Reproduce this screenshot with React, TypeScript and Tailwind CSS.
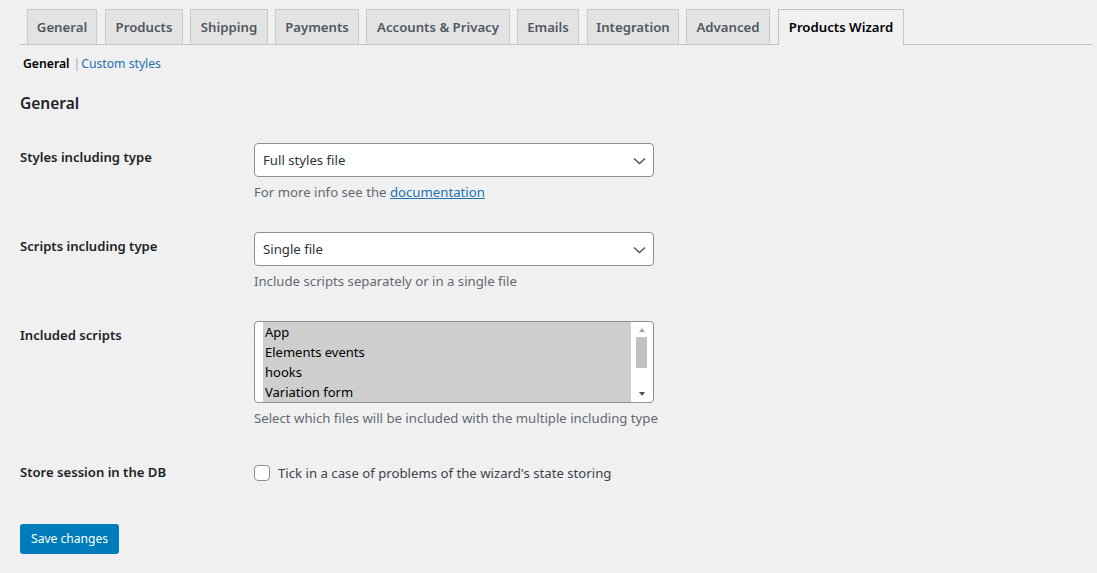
import React from 'react';

// label, width, left margin
const tabs: [string, string, string][] = [
  ['General', 'w-[70px]', 'ml-0'],
  ['Products', 'w-[78px]', 'ml-2'],
  ['Shipping', 'w-[78px]', 'ml-[7px]'],
  ['Payments', 'w-[84px]', 'ml-[7px]'],
  ['Accounts & Privacy', 'w-[144px]', 'ml-[7px]'],
  ['Emails', 'w-[62px]', 'ml-[7px]'],
  ['Integration', 'w-[92px]', 'ml-2'],
  ['Advanced', 'w-[84px]', 'ml-[7px]'],
  ['Products Wizard', 'w-[126px]', 'ml-2'],
];

const Chevron = () => (
  <svg width="13" height="8" viewBox="0 0 13 8" className="text-[#50575e]">
    <path d="M1 1.5 L6.5 6.5 L12 1.5" fill="none" stroke="currentColor" strokeWidth="1.5" />
  </svg>
);

const SelectBox = ({ value }: { value: string }) => (
  <div className="w-[400px] h-[34px] pt-px bg-white border border-[#8c8f94] rounded-[4px] flex items-center justify-between pl-[8px] pr-[7px] text-[13.2px] text-[#2c3338]">
    <span>{value}</span>
    <Chevron />
  </div>
);

const App = () => {
  return (
    <div className="min-h-[573px] bg-[#f0f0f1] font-['Noto_Sans',sans-serif] text-[#3c434a] px-5">
      {/* Tabs */}
      <nav className="flex items-end pt-[9px] pl-[7px] border-b border-[#c3c4c7] -mr-[15px]">
        {tabs.map(([t, w, ml], i) => {
          const active = i === tabs.length - 1;
          return (
            <div
              key={t}
              className={
                active
                  ? `${w} ${ml} h-[36px] -mb-px pt-px flex items-center justify-center whitespace-nowrap border border-b-0 border-[#c3c4c7] bg-[#f0f0f1] text-[13.2px] font-semibold text-black`
                  : `${w} ${ml} h-[35px] pt-[2px] flex items-center justify-center whitespace-nowrap border border-b-0 border-[#cacacc] bg-[#e3e3e4] text-[13.2px] font-semibold text-[#50575e]`
              }
            >
              {t}
            </div>
          );
        })}
      </nav>

      {/* Sub links */}
      <div className="mt-[9px] pl-[3px] text-[12.2px] leading-[20px] flex items-center">
        <span className="font-semibold text-black">General</span>
        <span className="ml-[4px] text-[#a7aaad]">|</span>
        <a href="#" className="ml-[1px] text-[#2271b1]">Custom styles</a>
      </div>

      <h2 className="mt-[18px] text-[15.5px] leading-[22px] font-semibold text-[#1d2327]">General</h2>

      {/* Row 1 */}
      <div className="flex mt-[29px]">
        <div className="w-[234px] pt-[4px] text-[13.1px] leading-[20px] font-semibold text-[#1d2327]">Styles including type</div>
        <div>
          <SelectBox value="Full styles file" />
          <p className="mt-[5px] text-[13.2px] leading-[20px] text-[#646970]">
            For more info see the <a href="#" className="text-[#2271b1] underline">documentation</a>
          </p>
        </div>
      </div>

      {/* Row 2 */}
      <div className="flex mt-[30px]">
        <div className="w-[234px] pt-[4px] text-[13.1px] leading-[20px] font-semibold text-[#1d2327]">Scripts including type</div>
        <div>
          <SelectBox value="Single file" />
          <p className="mt-[5px] text-[13.2px] leading-[20px] text-[#646970]">Include scripts separately or in a single file</p>
        </div>
      </div>

      {/* Row 3 */}
      <div className="flex mt-[30px]">
        <div className="w-[234px] pt-[4px] text-[13.1px] leading-[20px] font-semibold text-[#1d2327]">Included scripts</div>
        <div>
          <div className="w-[400px] h-[82px] bg-white border border-[#8c8f94] rounded-[4px] flex overflow-hidden">
            <div className="flex-1 pl-[8px]">
              {['App', 'Elements events', 'hooks', 'Variation form'].map((o) => (
                <div key={o} className="h-[20px] leading-[20px] bg-[#cecece] text-[13px] text-black pl-[2px]">{o}</div>
              ))}
            </div>
            <div className="w-[22px] flex flex-col items-center pr-[1px]">
              <svg width="8" height="6" viewBox="0 0 8 6" className="mt-[5px]"><path d="M1 5 L4 1 L7 5 Z" fill="#a3a3a3" /></svg>
              <div className="w-[11px] h-[31px] bg-[#c1c1c1] mt-[4px]" />
              <div className="flex-1" />
              <svg width="8" height="6" viewBox="0 0 8 6" className="mb-[5px]"><path d="M1 1 L4 5 L7 1 Z" fill="#505050" /></svg>
            </div>
          </div>
          <p className="mt-[5px] text-[13.2px] leading-[20px] text-[#646970]">Select which files will be included with the multiple including type</p>
        </div>
      </div>

      {/* Row 4 */}
      <div className="flex mt-[34px]">
        <div className="w-[234px] text-[13.1px] leading-[20px] font-semibold text-[#1d2327]">Store session in the DB</div>
        <label className="flex items-center gap-[8px] text-[13.2px] leading-[20px] text-[#3c434a]">
          <span className="w-[16px] h-[16px] bg-white border border-[#8c8f94] rounded-[4px] inline-block" />
          <span className="pt-px">Tick in a case of problems of the wizard's state storing</span>
        </label>
      </div>

      <button className="mt-[41px] h-[30px] px-[11px] rounded-[3px] bg-[#007cba] text-white text-[12.1px]">Save changes</button>
    </div>
  );
};

export default App;
